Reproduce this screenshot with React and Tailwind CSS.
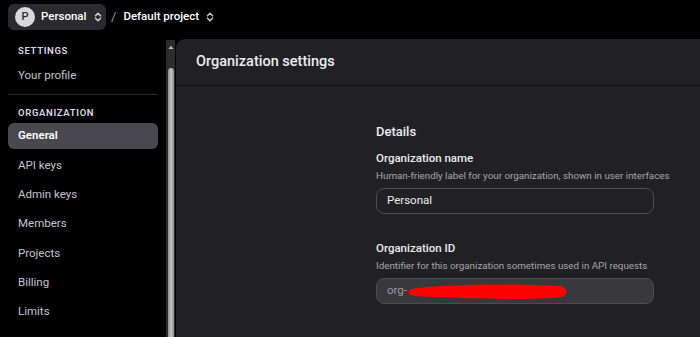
import React from "react";

const NAV = ["API keys", "Admin keys", "Members", "Projects", "Billing", "Limits"];

const Chevrons = ({ className }) => (
  <svg viewBox="0 0 12 12" className={className} fill="none" stroke="currentColor" strokeWidth="1.6" strokeLinecap="round" strokeLinejoin="round">
    <path d="M3.5 4.8 6 2.3l2.5 2.5" />
    <path d="M3.5 7.2 6 9.7l2.5-2.5" />
  </svg>
);

const TopBar = () => (
  <div className="h-[38px] flex items-center pl-2 pb-[4px]">
    <button className="h-[26px] w-[98px] shrink-0 flex items-center pl-[7px] gap-[6px] rounded-md bg-[#2b2b2f]">
      <span className="w-5 h-5 shrink-0 rounded-full bg-[#d8d8dd] text-[#2b2b2f] flex items-center justify-center text-[11px] font-medium">P</span>
      <span className="text-[11.5px] font-medium text-white">Personal</span>
      <Chevrons className="w-3 h-3 shrink-0 text-[#d0d0d6]" />
    </button>
    <span className="ml-[5px] text-[13px] text-[#9a9aa2]">/</span>
    <span className="ml-[7px] text-[11.5px] font-medium text-white">Default project</span>
    <Chevrons className="w-3 h-3 text-[#c0c0c6] ml-[5px]" />
  </div>
);

const Sidebar = () => (
  <div className="w-[166px] shrink-0 flex flex-col pl-2 pr-2">
    <div className="pt-[7px] pl-[10px] text-[9.5px] leading-[12px] font-semibold tracking-[0.07em] text-[#d9d9e0]">SETTINGS</div>
    <div className="mt-[9px] pl-[10px] text-[11.5px] leading-[18px] text-[#c5c5cd]">Your profile</div>
    <div className="mt-[10px] h-px bg-[#2e2e32]" />
    <div className="mt-[12px] pl-[10px] text-[9.5px] leading-[12px] font-semibold tracking-[0.07em] text-[#d9d9e0]">ORGANIZATION</div>
    <div className="mt-[4px] h-[26px] flex items-center pl-[10px] rounded-md bg-[#48484e] text-[11.5px] font-semibold text-white">General</div>
    <div className="mt-[2px] flex flex-col">
      {NAV.map((n) => (
        <div key={n} className="h-[29.2px] flex items-center pl-[10px] text-[11.5px] text-[#c5c5cd]">{n}</div>
      ))}
    </div>
  </div>
);

const Scrollbar = () => (
  <div className="w-[9px] shrink-0 mt-[2px] bg-[#2c2c2e] flex flex-col items-center">
    <svg viewBox="0 0 8 6" className="w-[6px] h-[4px] mt-[5px] text-[#b8b8b8]" fill="currentColor">
      <path d="M0 6 4 1l4 5z" />
    </svg>
    <div className="mt-[19px] flex-1 w-[6px] rounded-t-[3px] bg-gradient-to-r from-[#8a8a8a] via-[#c4c4c4] to-[#8a8a8a]" />
  </div>
);

const Field = ({ label, hint, children }) => (
  <div>
    <div className="text-[11.5px] leading-[16px] font-medium text-[#ececf1]">{label}</div>
    <div className="mt-[3px] text-[9.8px] leading-[14px] whitespace-nowrap text-[#a5a5ad]">{hint}</div>
    {children}
  </div>
);

const Main = () => (
  <div className="flex-1 ml-[1px] mt-px rounded-tl-[9px] bg-[#212124] flex flex-col">
    <div className="h-[47px] flex items-center pl-[20px] border-b border-[#121214]">
      <h1 className="text-[14.5px] font-medium text-[#ececf1]">Organization settings</h1>
    </div>
    <div className="pl-[200px] pt-[37px]">
      <h2 className="text-[13px] leading-[18px] font-medium text-[#ececf1]">Details</h2>
      <div className="mt-[9px]">
        <Field label="Organization name" hint="Human-friendly label for your organization, shown in user interfaces">
          <div className="mt-[5px] w-[278px] h-[26px] rounded-lg border border-[#4b4b50] flex items-center pl-[10px] text-[11.5px] text-[#ececf1]">
            Personal
          </div>
        </Field>
      </div>
      <div className="mt-[26px]">
        <Field label="Organization ID" hint="Identifier for this organization sometimes used in API requests">
          <div className="mt-[5px] w-[278px] h-[26px] rounded-lg border border-[#4b4b50] bg-[#38383d] relative flex items-center pl-[10px] text-[11.5px] text-[#9a9aa2]">
            org-
            <svg viewBox="0 0 160 18" className="absolute left-[31px] top-[4px] w-[160px] h-[18px]">
              <path d="M1 7 C 10 4, 30 3, 60 2 C 95 1, 130 2, 152 3 C 160 4, 161 11, 154 14 C 130 17, 90 16, 55 15 C 30 14, 10 14, 3 12 C 0 11, 0 8, 1 7 Z" fill="#ff0000" />
            </svg>
          </div>
        </Field>
      </div>
    </div>
  </div>
);

export default function App() {
  return (
    <div className="w-[700px] h-[337px] overflow-hidden bg-black flex flex-col" style={{ fontFamily: "Roboto, 'Liberation Sans', Arial, sans-serif" }}>
      <TopBar />
      <div className="flex-1 flex min-h-0">
        <Sidebar />
        <Scrollbar />
        <Main />
      </div>
    </div>
  );
}
